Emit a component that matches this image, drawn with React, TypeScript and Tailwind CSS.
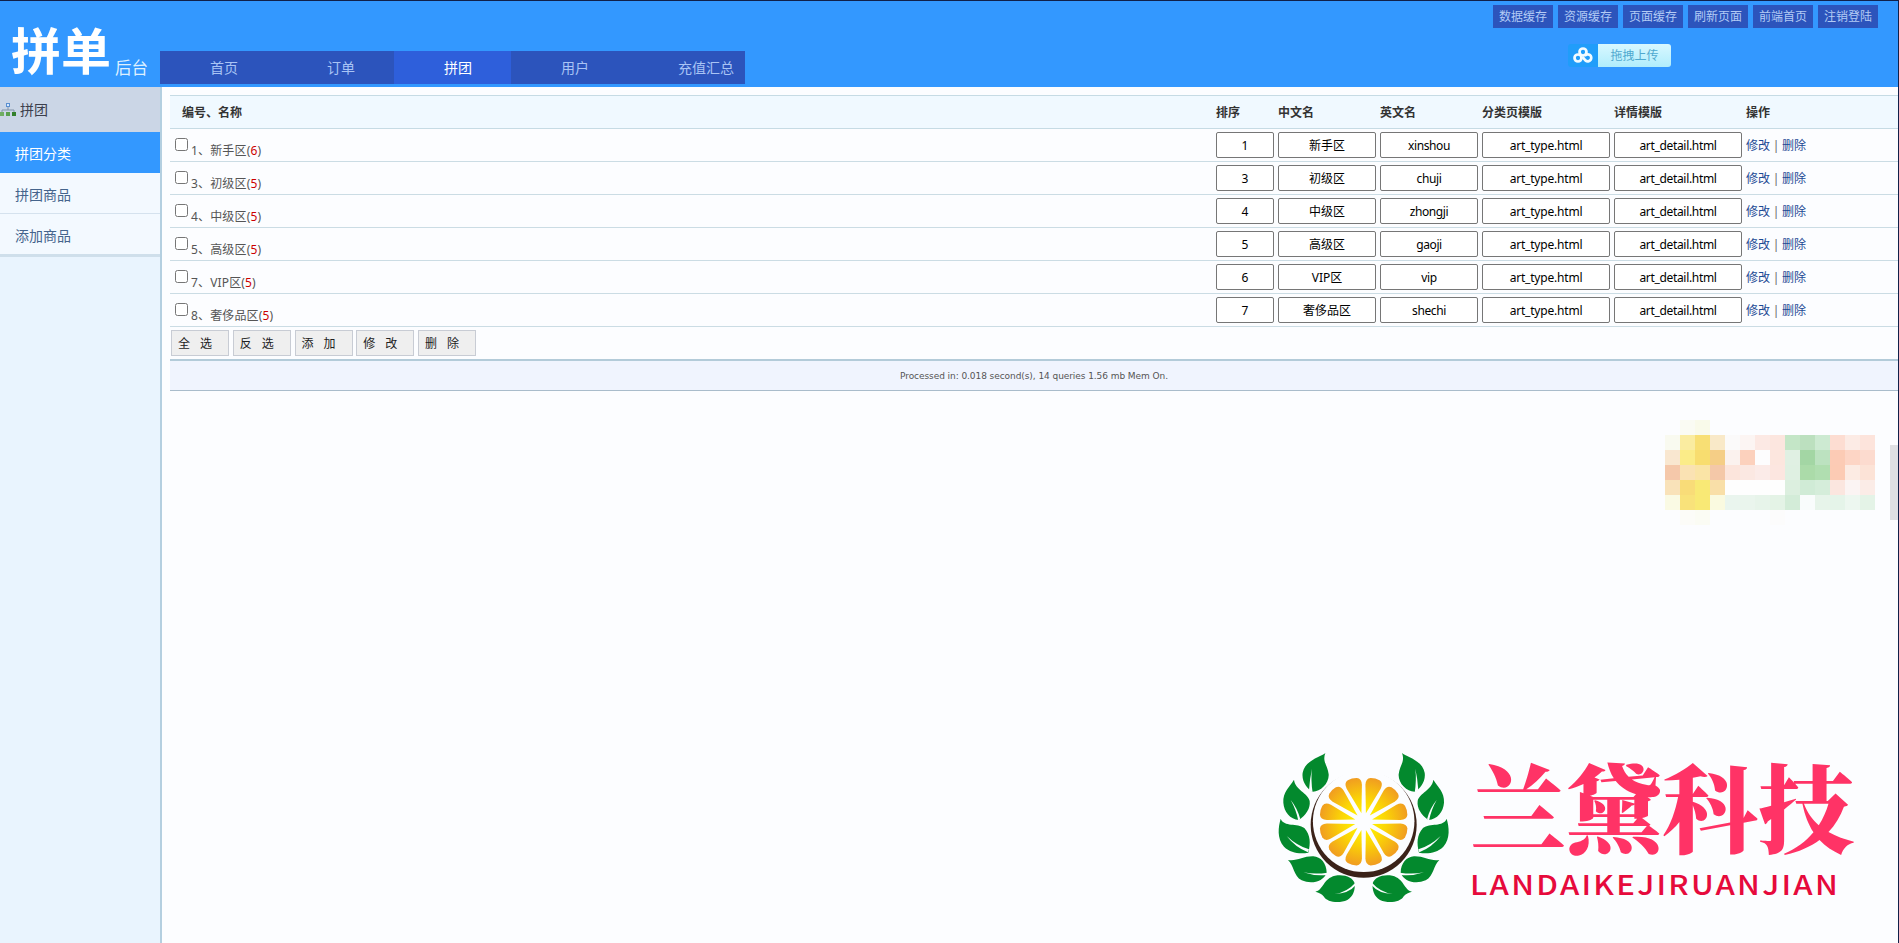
const topLinks = ["数据缓存", "资源缓存", "页面缓存", "刷新页面", "前端首页", "注销登陆"];
const tabs = ["首页", "订单", "拼团", "用户", "充值汇总"];
const rows = [
  { id: 1, name: "新手区", count: 6, sort: "1", en: "xinshou" },
  { id: 3, name: "初级区", count: 5, sort: "3", en: "chuji" },
  { id: 4, name: "中级区", count: 5, sort: "4", en: "zhongji" },
  { id: 5, name: "高级区", count: 5, sort: "5", en: "gaoji" },
  { id: 7, name: "VIP区", count: 5, sort: "6", en: "vip" },
  { id: 8, name: "奢侈品区", count: 5, sort: "7", en: "shechi" },
];
const actions = ["全 选", "反 选", "添 加", "修 改", "删 除"];

const mosaic = [
  ["", "#fafbf3", "#f9faea", "", "", "", "", "", "", "", "", "", "", ""],
  ["#f9faf0", "#faeca0", "#f8df74", "#f9e9c8", "#fbfafa", "#fcf5f3", "#fce9e4", "#fce6df", "#c4e6c7", "#bce0bf", "#cdead2", "#fdddd2", "#fcebe5", "#fde4dc"],
  ["#f9e7d0", "#fbec88", "#f8dd6f", "#f5ce86", "#fbf2ee", "#fcd1bd", "#fdfdfe", "#fce6de", "#e0f0e3", "#a3d6a4", "#bce2c0", "#fccbb5", "#fdd5c5", "#fcdbcf"],
  ["#f5c8aa", "#fae2b3", "#fae4a6", "#f4c8a8", "#fce5dc", "#fbe8e2", "#fbebe8", "#fce6e0", "#dff0e2", "#abdba9", "#b0deb0", "#fccbb4", "#fcebe3", "#fce3d7"],
  ["#f9e2b9", "#f9dc78", "#f9e975", "#f9dfa8", "#fefefe", "#fefefe", "#fefefe", "#fefefe", "#dcefdf", "#d0ebd6", "#d5edda", "#fbe6df", "#fbf4f3", "#fbece7"],
  ["#fafae4", "#f9e27a", "#f9e975", "#fafae0", "#eaf5ee", "#eaf5ed", "#e7f4ea", "#e4f3e6", "#d3ecd8", "#f9fcfc", "#e7f4ea", "#e5f4e9", "#edf7f0", "#e4f3e7"],
  ["", "#fcfcf8", "#fbfcf4", "", "", "", "", "#fcfcfc", "", "", "", "", "", ""],
];

const sprig = [
  "M196 39 C185 50 135 60 128 98 C124 125 142 145 156 155 C180 157 208 130 206 103 C203 75 186 65 196 39Z",
  "M102 119 C90 140 68 155 70 188 C72 215 90 238 117 240 C138 225 152 205 149 183 C144 158 105 150 102 119Z",
  "M62 236 C55 260 50 295 72 320 C92 340 120 342 145 338 C152 310 152 285 133 264 C112 248 72 262 62 236Z",
  "M84 360 C110 365 130 348 160 349 C182 350 200 370 200 398 C190 425 155 434 125 421 C100 408 102 375 84 360Z",
  "M166 455 C190 450 190 415 225 407 C255 402 278 412 284 430 C286 450 280 470 262 480 C235 492 200 485 192 470 C185 460 176 458 166 455Z",
];
const veins = [
  "M147 150 Q149 118 156 86 Q152 120 158 158Z",
  "M115 242 Q108 208 92 180 Q112 204 121 238Z",
  "M147 328 Q112 318 80 288 Q106 322 144 337Z",
  "M202 398 Q165 404 130 397 Q165 409 200 405Z",
  "M286 428 Q262 456 224 462 Q266 461 287 436Z",
];

function Sprig() {
  return (
    <>
      {sprig.map((d) => <path key={d} d={d} fill="#03892d" />)}
      {veins.map((d) => <path key={d} d={d} fill="#fbfdff" />)}
    </>
  );
}

function FruitLogo() {
  return (
    <svg width="210" height="180" viewBox="0 0 630 540" className="shrink-0">
      <defs>
        <radialGradient id="pulp" gradientUnits="userSpaceOnUse" cx="0" cy="0" r="136">
          <stop offset="0.2" stopColor="#ffee00" />
          <stop offset="0.5" stopColor="#fbd505" />
          <stop offset="1" stopColor="#f09a22" />
        </radialGradient>
      </defs>
      <circle cx="311" cy="254" r="159" fill="#3b2219" />
      <circle cx="311" cy="244" r="152.3" fill="#fcfdff" />
      <g transform="translate(311 245)">
        {[15, 45, 75, 105, 135, 165, 195, 225, 255, 285, 315, 345].map((a) => (
          <path key={a} transform={`rotate(${a})`} fill="url(#pulp)" d="M26 0 L108 23.5 Q127 28 132 14 Q136 0 132 -14 Q127 -28 108 -23.5Z" />
        ))}
      </g>
      <Sprig />
      <g transform="translate(622 0) scale(-1 1)"><Sprig /></g>
    </svg>
  );
}

function Field({ value, className }: { value: string; className: string }) {
  return (
    <div className={`flex h-[26px] items-center justify-center rounded-[2px] border border-[#767676] bg-white pt-[2px] text-black ${className}`}>
      {value}
    </div>
  );
}

export default function App() {
  return (
    <div className="relative flex h-[943px] w-[1899px] flex-col overflow-hidden border-t border-r border-[#10204a] bg-[#fcfdff] text-[12px] font-['Noto_Sans','Noto_Sans_CJK_SC',sans-serif]">
      <header className="flex h-[86px] shrink-0 bg-[#3398ff]">
        <div className="flex w-[160px] items-end pb-[8px] pl-[11px] text-white">
          <span className="text-[50px] leading-[56px] font-bold">拼单</span>
          <span className="pl-[4px] text-[16.5px] leading-[22px] text-[#dff0ff]">后台</span>
        </div>
        <nav className="mt-[50px] flex h-[33px] text-[14px] text-[#a9c4f5]">
          {tabs.map((t) => (
            <div key={t} className={`flex w-[117px] items-center pl-[50px] ${t === "拼团" ? "bg-[#2e5fdb] text-white" : "bg-[#2c54bc]"}`}>
              {t}
            </div>
          ))}
        </nav>
        <div className="ml-auto flex flex-col pr-[20px] pt-[4px]">
          <div className="flex gap-[5px]">
            {topLinks.map((t) => (
              <span key={t} className="flex h-[23px] w-[60px] items-center justify-center bg-[#2c54bc] text-[#b3cbf5]">{t}</span>
            ))}
          </div>
          <div className="mt-[16px] ml-[75px] flex h-[23px] w-[103px] overflow-hidden rounded-[3px]">
            <span className="flex w-[30px] items-center justify-center bg-[#209dfa]">
              <svg width="20" height="17" viewBox="0 0 20 17" fill="none" stroke="#f2fbff" strokeWidth="2.7">
                <circle cx="10" cy="5" r="3.5" />
                <circle cx="5" cy="11" r="3.5" />
                <path d="M11.8 9 A3.5 3.5 0 1 1 12.6 13.6 L9.5 10" />
              </svg>
            </span>
            <span className="flex flex-1 items-center justify-center bg-linear-to-b from-[#d8f8ff] to-[#b0edfc] text-[#4fa9cf]">拖拽上传</span>
          </div>
        </div>
      </header>

      <div className="flex min-h-0 flex-1">
        <aside className="w-[162px] shrink-0 border-r-2 border-[#b4cfe0] bg-[#e9f4fe] text-[14px] text-[#45648c]">
          <div className="flex h-[45px] items-center gap-[4px] bg-[#cbd6e6] text-[#3c3f4c]">
            <svg width="16" height="14" viewBox="0 0 16 14">
              <rect x="6.5" y="0.5" width="3" height="3" fill="#d7e9ff" stroke="#5a8fd0" />
              <path d="M8 4 V7 M2 9 V7 H14 V9" stroke="#8295a8" fill="none" />
              <rect x="0" y="9" width="4" height="4" fill="#6fae62" />
              <rect x="6" y="9" width="4" height="4" fill="#5aa04e" />
              <rect x="12" y="9" width="4" height="4" fill="#33802b" />
            </svg>
            <span>拼团</span>
          </div>
          <div className="flex h-[41px] items-center bg-[#3398ff] pl-[15px] pt-px text-white">拼团分类</div>
          <div className="flex h-[41px] items-center border-b border-[#d5e2ee] bg-[#f3f9ff] pl-[15px] pt-[2px]">拼团商品</div>
          <div className="flex h-[43px] items-center border-b-[3px] border-[#cfdfeb] bg-[#f3f9ff] pl-[15px] pt-[3px]">添加商品</div>
        </aside>

        <main className="min-w-0 flex-1 pt-[8px] pl-[8px]">
          <div className="flex h-[34px] items-center border-y border-[#c6dbe4] bg-[#f0f9ff] pt-[2px] font-bold text-[#333]">
            <span className="w-[1046px] pl-[12px]">编号、名称</span>
            <span className="w-[62px]">排序</span>
            <span className="w-[102px]">中文名</span>
            <span className="w-[102px]">英文名</span>
            <span className="w-[132px]">分类页模版</span>
            <span className="w-[132px]">详情模版</span>
            <span>操作</span>
          </div>
          {rows.map((r) => (
            <div key={r.id} className="flex h-[33px] items-center border-b border-[#cbdce4] text-[#555]">
              <div className="flex h-full w-[1046px] items-start pl-[5px]">
                <span className="mt-[9px] size-[13px] rounded-[2.5px] border border-[#767676] bg-white" />
                <span className="mt-[13px] ml-[3px] leading-[18px] tracking-[0.15px]">
                  {r.id}、{r.name}(<span className="text-[#c00]">{r.count}</span>)
                </span>
              </div>
              <div className="flex gap-[4px]">
                <Field value={r.sort} className="w-[58px]" />
                <Field value={r.name} className="w-[98px]" />
                <Field value={r.en} className="w-[98px] tracking-[-0.4px]" />
                <Field value="art_type.html" className="w-[128px] tracking-[-0.2px]" />
                <Field value="art_detail.html" className="w-[128px] tracking-[-0.33px]" />
                <span className="flex items-center pt-[2px] text-[#1c4a94]">
                  修改<span className="w-[12px] text-center text-[#666]">|</span>删除
                </span>
              </div>
            </div>
          ))}
          <div className="flex h-[32px] gap-[3.75px] pt-[3px] pl-px">
            {actions.map((a) => (
              <span key={a} className="flex h-[26px] w-[58px] items-center border border-[#c8ccd4] bg-[#efefef] pt-[2px] pl-[6px] whitespace-pre text-[#222] [word-spacing:7px]">{a}</span>
            ))}
          </div>
          <div className="flex h-[32px] items-center justify-center border-t-2 border-b border-t-[#b3cbd9] border-b-[#a9bccb] bg-[#f0f4fe] pt-[3px] font-['DejaVu_Sans',sans-serif] text-[9px] tracking-[-0.07px] text-[#555]">
            Processed in: 0.018 second(s), 14 queries 1.56 mb Mem On.
          </div>
        </main>
      </div>

      <div className="absolute top-[419px] left-[1665px] grid grid-cols-[repeat(14,15px)] auto-rows-[15px]">
        {mosaic.flat().map((c, i) => <span key={i} style={{ backgroundColor: c || "transparent" }} />)}
      </div>
      <div className="absolute top-[444px] -right-px h-[75px] w-[9px] bg-[#dfe0e3]" />

      <div className="absolute top-[739px] left-[1260px] flex">
        <FruitLogo />
        <div className="flex flex-col items-start whitespace-nowrap">
          <span className="mt-[10px] h-[114px] text-[96px] leading-[107px] font-black text-[#ff3366] font-['Noto_Serif_CJK_SC','Noto_Sans_CJK_SC',serif]">兰黛科技</span>
          <span className="origin-left scale-x-[1.13] text-[27.5px] leading-[38px] font-medium tracking-[2px] text-[#e60a3c] font-['Noto_Sans_CJK_SC',sans-serif]">LANDAIKEJIRUANJIAN</span>
        </div>
      </div>
    </div>
  );
}
